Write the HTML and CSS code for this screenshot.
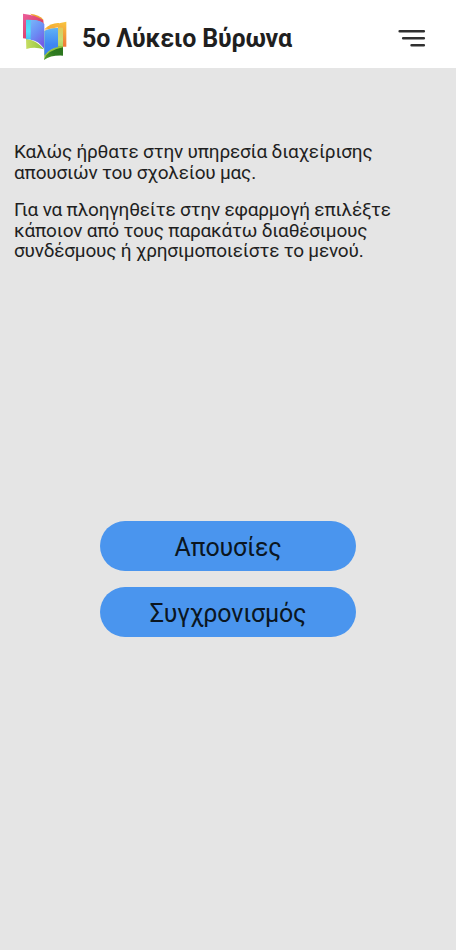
FILE: index.html
```html
<!DOCTYPE html>
<html lang="el">
<head>
<meta charset="utf-8">
<meta name="viewport" content="width=device-width, initial-scale=1">
<title>5ο Λύκειο Βύρωνα</title>
<link rel="stylesheet" href="styles.css">
</head>
<body>
<header class="topbar">
  <svg class="logo" viewBox="0 0 180 180" aria-hidden="true">
    <defs>
      <linearGradient id="pink" x1="0" y1="0" x2="1" y2="1"><stop offset="0" stop-color="#ec5f9c"/><stop offset="1" stop-color="#cf2f4c"/></linearGradient>
      <linearGradient id="blueL" x1="0" y1="0" x2=".5" y2="1"><stop offset="0" stop-color="#79b5f8"/><stop offset=".5" stop-color="#6b8ff5"/><stop offset="1" stop-color="#755ce6"/></linearGradient>
      <linearGradient id="cyan" x1="0" y1="0" x2="0" y2="1"><stop offset="0" stop-color="#4ccdf3"/><stop offset=".5" stop-color="#55e0fc"/><stop offset="1" stop-color="#43aef0"/></linearGradient>
      <linearGradient id="orange" x1="1" y1="0" x2=".8" y2="1"><stop offset="0" stop-color="#f8c83e"/><stop offset="1" stop-color="#ef7438"/></linearGradient>
      <linearGradient id="blueR" x1="0" y1="0" x2="0" y2="1"><stop offset="0" stop-color="#5fb2f6"/><stop offset=".6" stop-color="#3f86f3"/><stop offset="1" stop-color="#3a82ee"/></linearGradient>
      <linearGradient id="lime" x1="0" y1="0" x2="0" y2="1"><stop offset="0" stop-color="#e0c85a"/><stop offset=".4" stop-color="#c3dd76"/><stop offset="1" stop-color="#93c83f"/></linearGradient>
      <linearGradient id="leaf" x1="0" y1="0" x2="1" y2="0"><stop offset="0" stop-color="#c6dd62"/><stop offset="1" stop-color="#8fc33d"/></linearGradient>
      <linearGradient id="dark" x1="0" y1="1" x2="1" y2="0"><stop offset="0" stop-color="#5aa52f"/><stop offset=".5" stop-color="#2d7a20"/><stop offset="1" stop-color="#2b721c"/></linearGradient>
    </defs>
    <path fill="#f1a232" d="M48 23Q76 25 89 42L76 46Z"/>
    <path fill="url(#pink)" d="M27 23Q66 27 88 43L90 66L38 98L27 97Z"/>
    <path fill="url(#leaf)" d="M36 98Q68 102 90 130Q62 121 37 129Z"/>
    <path fill="url(#cyan)" d="M36 41Q72 40 86 50V112Q66 100 36 100Z"/>
    <path fill="url(#blueL)" d="M50 42Q77 41 91 54V129Q74 104 50 101Z"/>
    <path fill="#f5b62f" d="M91 70Q111 50 135 51L134 60Z"/>
    <path fill="url(#orange)" d="M91 72Q119 52 157 47V122H132V64Z"/>
    <path fill="url(#lime)" d="M91 74Q117 63 147 65V124Q110 126 91 154Z"/>
    <path fill="url(#dark)" d="M90 162Q94 131 147 122V149Q111 147 90 162Z"/>
    <path fill="#94c43f" d="M91 157Q103 133 147 124V121L130 119L94 144Z"/>
    <path fill="url(#blueR)" d="M91 75Q108 66 132 66V123Q108 126 91 149Z"/>
  </svg>
  <h1 class="title">5ο Λύκειο Βύρωνα</h1>
  <button class="menu" type="button" aria-label="Μενού">
    <svg viewBox="0 0 28 18" width="28" height="18" aria-hidden="true">
      <path d="M1.7 2.3H25.8M5.2 9.3H25.8M13.6 16.2H25.8" stroke="#303030" stroke-width="2.6" stroke-linecap="round"/>
    </svg>
  </button>
</header>
<main class="content">
  <section class="intro">
    <p>Καλώς ήρθατε στην υπηρεσία διαχείρισης απουσιών του σχολείου μας.</p>
    <p>Για να πλοηγηθείτε στην εφαρμογή επιλέξτε κάποιον από τους παρακάτω διαθέσιμους συνδέσμους ή χρησιμοποιείστε το μενού.</p>
  </section>
  <nav class="actions">
    <a class="action">Απουσίες</a>
    <a class="action">Συγχρονισμός</a>
  </nav>
</main>
</body>
</html>
```
FILE: styles.css
```css
* { box-sizing: border-box; }
body {
  margin: 0;
  min-height: 950px;
  background: #e5e5e5;
  color: #1f1f1f;
  font-family: Roboto, "Liberation Sans", sans-serif;
}
.topbar {
  display: flex;
  align-items: center;
  height: 68px;
  padding: 0 30px 0 14px;
  background: #fff;
}
.logo { width: 60px; height: 60px; margin-top: 4px; }
.title {
  flex: 1;
  margin: 9px 0 0 8px;
  font-size: 25px;
  letter-spacing: -0.16px;
  line-height: 30px;
  font-weight: 700;
  white-space: nowrap;
}
.menu {
  display: flex;
  margin: 8px 0 0;
  padding: 0;
  border: 0;
  background: none;
}
.content { padding: 74px 14px 0; }
.intro {
  height: 379px;
  font-size: 19px;
  letter-spacing: -0.2px;
  line-height: 20.6px;
}
.intro p { margin: 0 0 17px; }
.actions {
  display: flex;
  flex-direction: column;
  align-items: center;
  gap: 16px;
}
.action {
  display: flex;
  align-items: center;
  justify-content: center;
  width: 256px;
  height: 50px;
  padding-top: 3px;
  border-radius: 25px;
  background: #4a95ee;
  color: #0b1621;
  font-size: 25px;
  letter-spacing: -0.17px;
}
```
